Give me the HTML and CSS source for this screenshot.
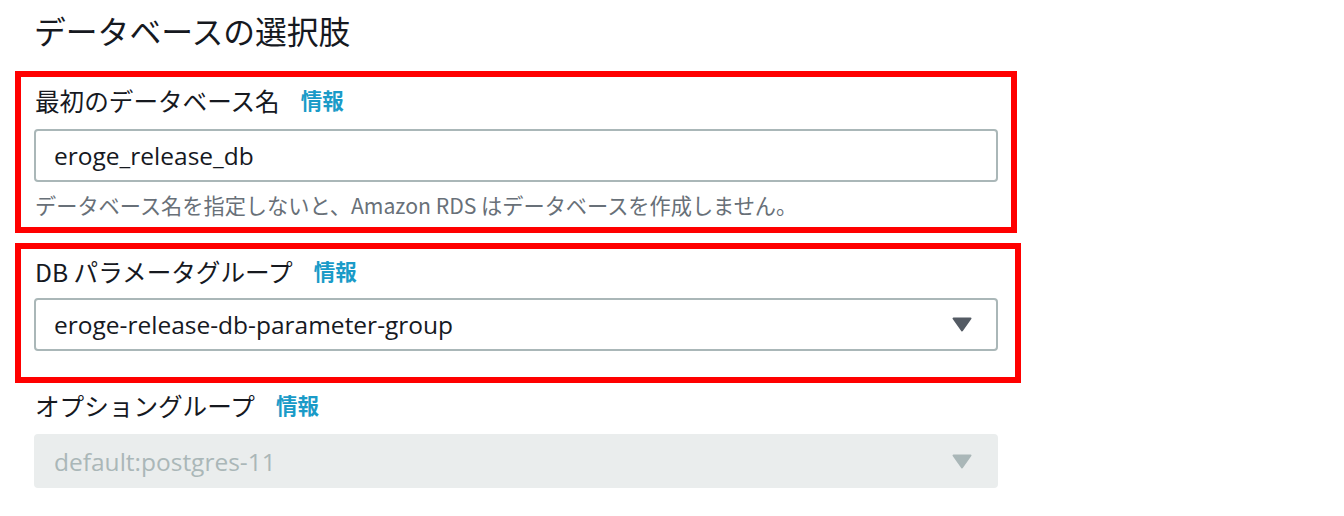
FILE: index.html
```html
<!DOCTYPE html>
<html lang="ja">
<head>
<meta charset="utf-8">
<link rel="stylesheet" href="styles.css">
</head>
<body>
<div class="page">
  <h2 class="title">データベースの選択肢</h2>

  <div class="highlight box1">
    <div class="label">最初のデータベース名<a class="info">情報</a></div>
    <div class="input">eroge_release_db</div>
    <div class="help">データベース名を指定しないと、Amazon RDS はデータベースを作成しません。</div>
  </div>

  <div class="highlight box2">
    <div class="label">DB パラメータグループ<a class="info">情報</a></div>
    <div class="select">
      <span>eroge-release-db-parameter-group</span>
      <svg class="caret" width="20" height="15" viewBox="0 0 20 15"><polygon points="1.5,1.5 18.5,1.5 10,13.5" fill="#545b64" stroke="#545b64" stroke-width="2" stroke-linejoin="round"/></svg>
    </div>
  </div>

  <div class="plain">
    <div class="label">オプショングループ<a class="info">情報</a></div>
    <div class="select disabled">
      <span>default:postgres-11</span>
      <svg class="caret" width="20" height="15" viewBox="0 0 20 15"><polygon points="1.5,1.5 18.5,1.5 10,13.5" fill="#aab7b8" stroke="#aab7b8" stroke-width="2" stroke-linejoin="round"/></svg>
    </div>
  </div>
</div>
</body>
</html>
```

FILE: styles.css
```css
* { box-sizing: border-box; }
html, body { margin: 0; padding: 0; background: #ffffff; }
body {
  font-family: "Noto Sans", "Noto Sans CJK JP", sans-serif;
  color: #16191f;
}
.page {
  display: flex;
  flex-direction: column;
  width: 1344px;
  height: 516px;
}
.title {
  margin: 0 0 11px 0;
  padding-left: 34px;
  height: 60px;
  line-height: 60px;
  font-size: 31.8px;
  font-weight: 400;
  color: #16191f;
  font-family: "Noto Sans CJK JP", sans-serif;
}
.highlight {
  border: 6px solid #ff0000;
  margin-left: 15px;
  display: flex;
  flex-direction: column;
}
.box1 {
  width: 1002px;
  height: 162px;
  padding: 8px 13px 0 13px;
}
.box2 {
  width: 1006px;
  height: 140px;
  margin-top: 10px;
  padding: 7px 17px 0 13px;
}
.plain {
  padding: 7px 0 0 34px;
  width: 998px;
  display: flex;
  flex-direction: column;
}
.label {
  font-family: "Noto Sans CJK JP", sans-serif;
  font-size: 24.6px;
  line-height: 30px;
  height: 30px;
  color: #16191f;
  padding-left: 1px;
  display: flex;
  align-items: center;
}
.info {
  margin-left: 21px;
  font-size: 21.5px;
  font-weight: 700;
  color: #1a9bc8;
}
.input, .select {
  height: 53px;
  border: 2px solid #aab7b8;
  border-radius: 4px;
  background: #fff;
  font-size: 24.5px;
  padding-left: 18px;
  display: flex;
  align-items: center;
  color: #16191f;
  font-family: "Open Sans", "Noto Sans CJK JP", sans-serif;
}
.input { margin-top: 14px; }
.box2 .select { margin-top: 12px; }
.select {
  justify-content: space-between;
  padding-right: 24px;
}
.select.disabled {
  margin-top: 14px;
  height: 54px;
  background: #eaeded;
  border-color: #eaeded;
  color: #aab7b8;
}
.caret { display: block; }
.help {
  margin-top: 9px;
  font-family: "Noto Sans CJK JP", sans-serif;
  font-size: 21.2px;
  line-height: 28px;
  color: #687078;
  padding-left: 1px;
}
```
